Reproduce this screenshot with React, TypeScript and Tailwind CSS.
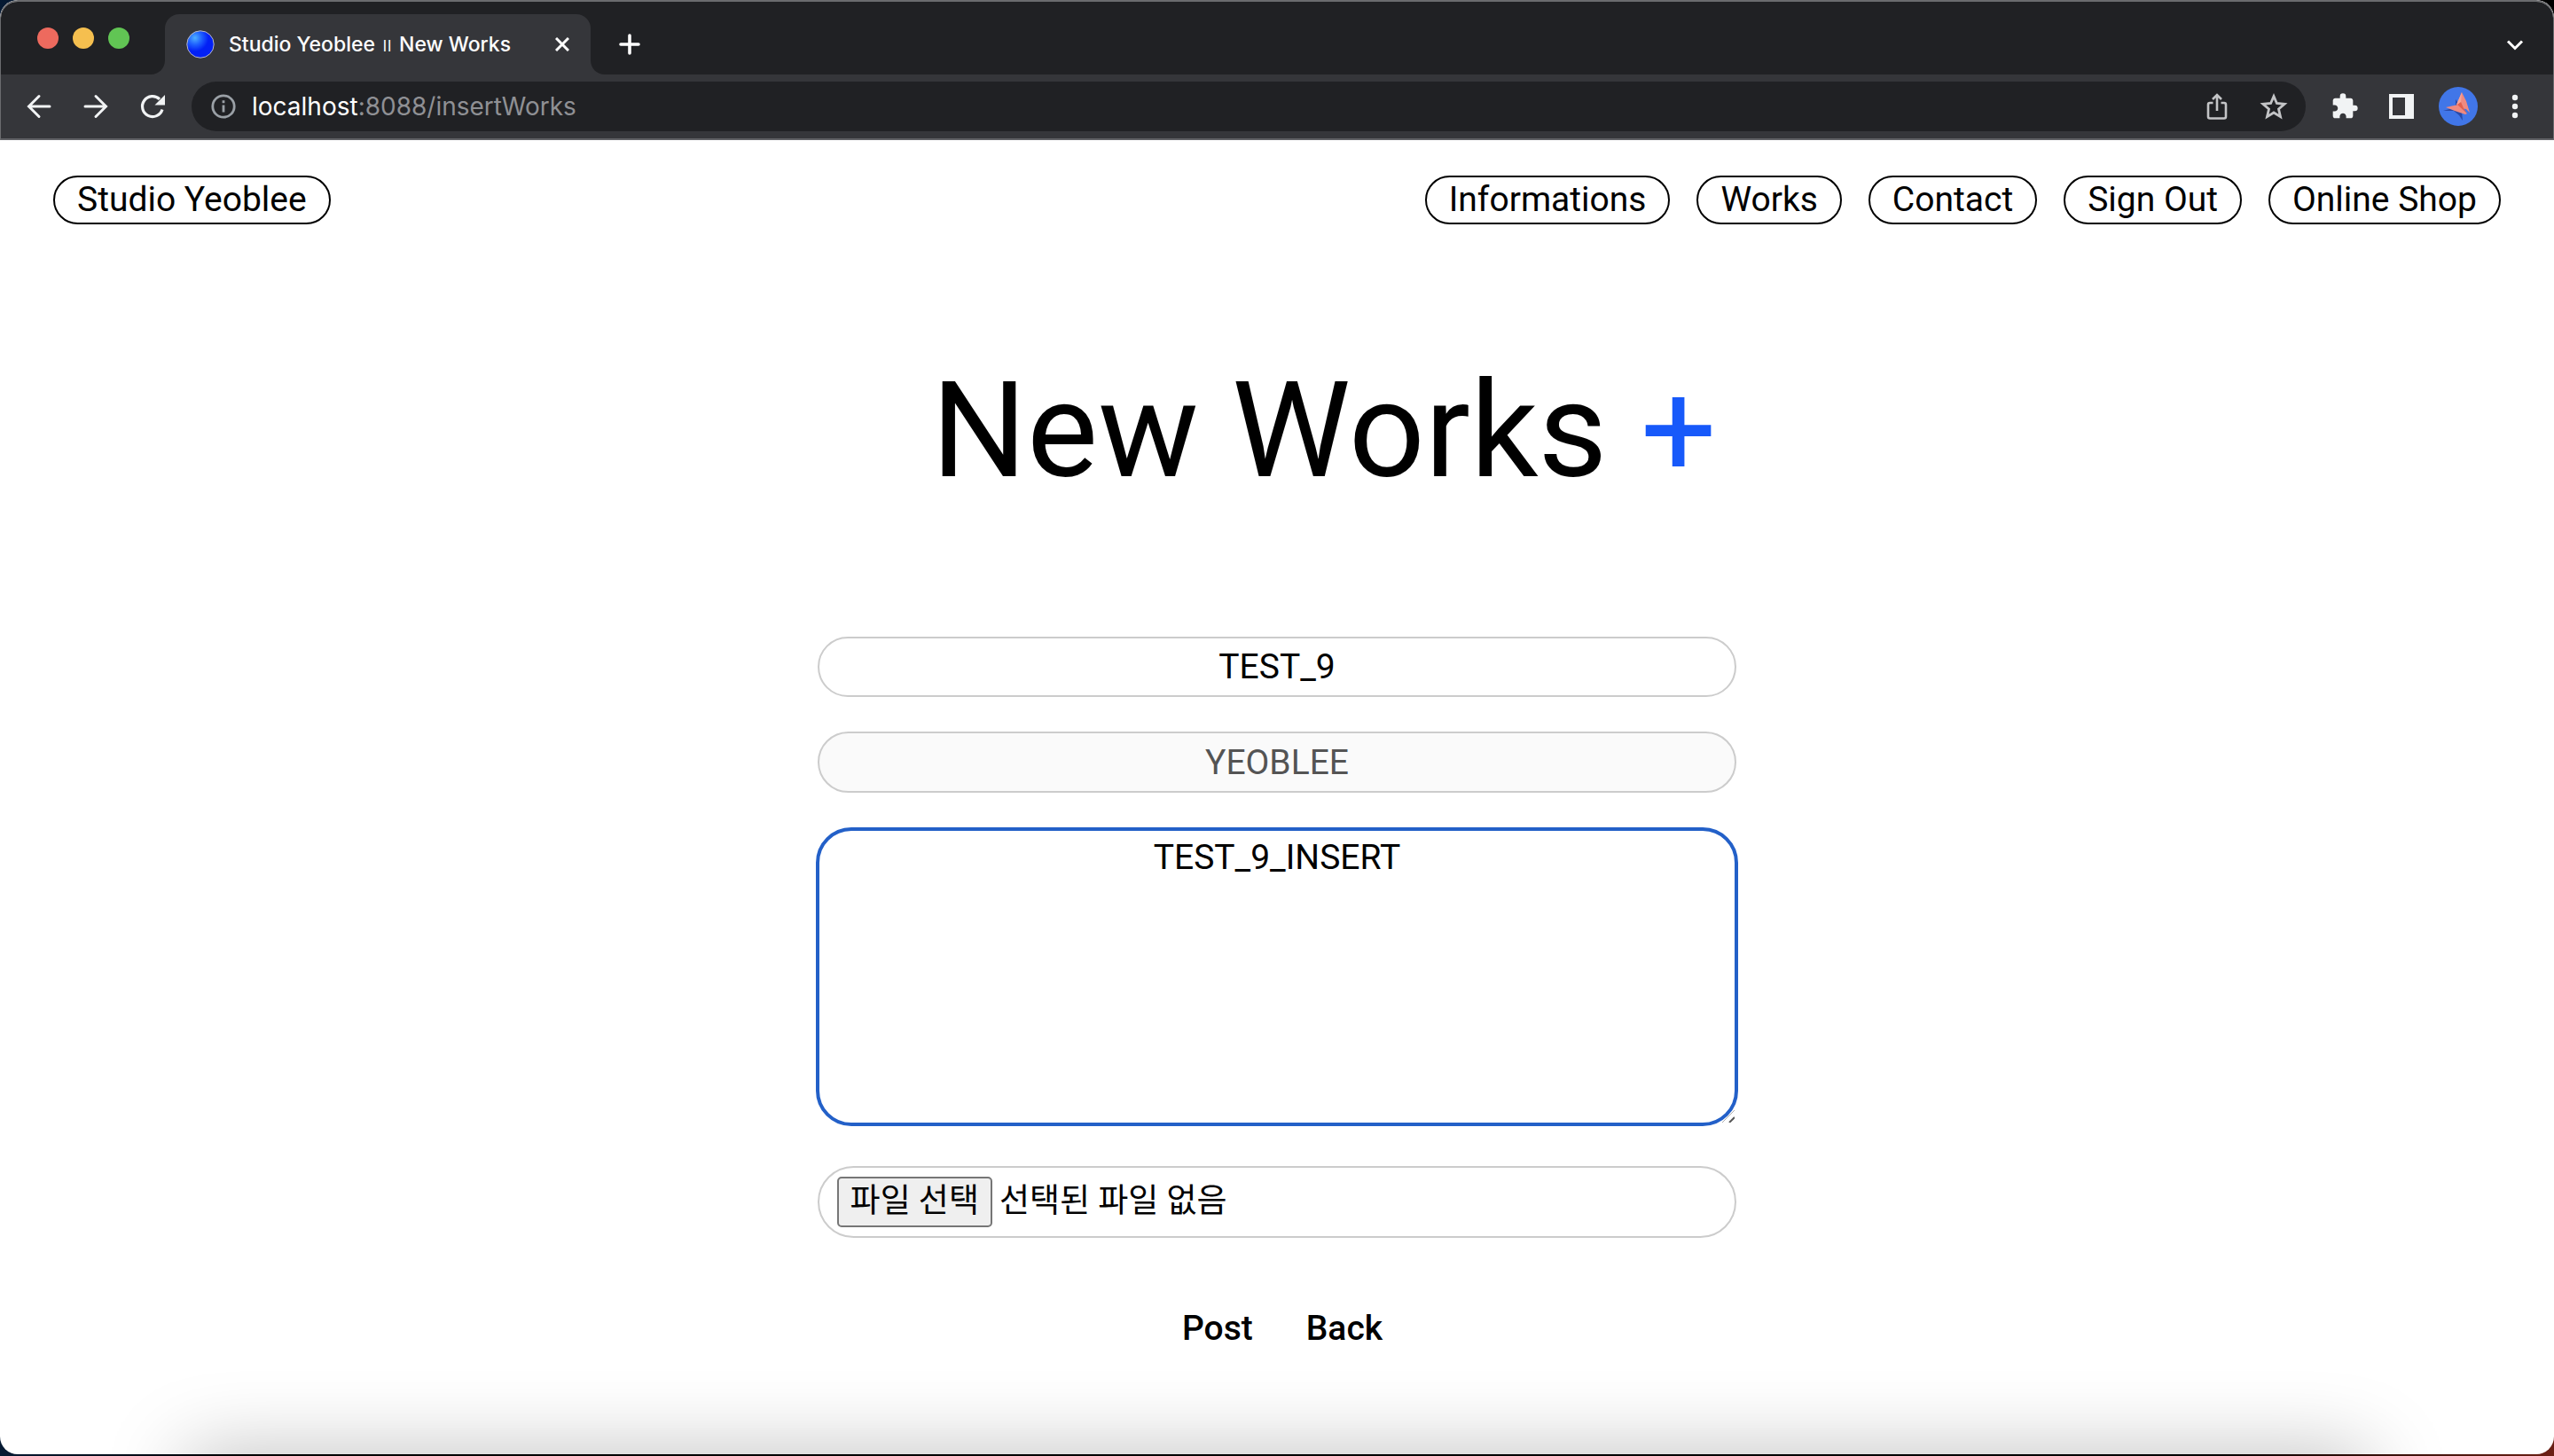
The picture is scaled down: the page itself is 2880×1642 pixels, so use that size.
import React, { useState } from "react";

const navItems = ["Informations", "Works", "Contact", "Sign Out", "Online Shop"];

const pill =
  "flex h-[55px] items-center rounded-full border-2 border-black px-[25px] pb-0.5 text-[39px] leading-[48px] whitespace-nowrap text-black";

const field =
  "w-full rounded-full border-2 border-[#cccccc] text-center text-[39px] leading-[48px]";

function TabStrip() {
  return (
    <div className="flex h-[82px] items-end bg-[#202124] pt-3.5 pr-[27px] pl-[41px] font-['Inter','Roboto',sans-serif]">
      <div className="flex gap-4 self-start pt-[15px]">
        <button aria-label="Close window" className="size-6 rounded-full bg-[#ed6a5e]" />
        <button aria-label="Minimize window" className="size-6 rounded-full bg-[#f5bf4f]" />
        <button aria-label="Zoom window" className="size-6 rounded-full bg-[#61c554]" />
      </div>
      <div className="flex h-full items-end pl-6">
        <svg className="size-4" viewBox="0 0 16 16" aria-hidden="true">
          <path d="M16 0v16H0C9 16 16 9 16 0z" fill="#35363a" />
        </svg>
        <div className="flex h-full w-[480px] items-center rounded-t-[16px] bg-[#35363a] px-6">
          <svg className="size-8" viewBox="0 0 32 32" aria-hidden="true">
            <defs>
              <radialGradient id="ball" cx="0.3" cy="0.26" r="0.5">
                <stop offset="0" stopColor="#4fb0ff" />
                <stop offset="0.5" stopColor="#1f62ff" />
                <stop offset="1" stopColor="#0220f5" />
              </radialGradient>
            </defs>
            <circle cx="16" cy="16" r="15.2" fill="url(#ball)" stroke="#b9b9c4" strokeWidth="1" />
          </svg>
          <span className="grow pl-4 text-[23px] leading-8 font-medium whitespace-nowrap text-white">
            Studio Yeoblee <span className="px-0.5 font-light">ıı</span> New Works
          </span>
          <button aria-label="Close tab">
            <svg className="size-4" viewBox="0 0 16 16" fill="none" stroke="#fff" strokeWidth="3">
              <path d="M1 1l14 14M15 1L1 15" />
            </svg>
          </button>
        </div>
        <svg className="size-4" viewBox="0 0 16 16" aria-hidden="true">
          <path d="M0 0v16h16C7 16 0 9 0 0z" fill="#35363a" />
        </svg>
      </div>
      <button aria-label="New tab" className="ml-4 flex h-full items-center">
        <svg className="size-6" viewBox="0 0 24 24" fill="none" stroke="#fff" strokeWidth="3.6" strokeLinecap="round">
          <path d="M12 2v20M2 12h20" />
        </svg>
      </button>
      <button aria-label="Search tabs" className="ml-auto flex h-full items-center">
        <svg className="size-8" viewBox="0 0 32 32" fill="none" stroke="#fff" strokeWidth="3">
          <path d="M8 12.500l8 8 8-8" />
        </svg>
      </button>
    </div>
  );
}

function Toolbar() {
  return (
    <div className="flex h-[74px] items-center border-b-2 border-[#606165] bg-[#35363a] px-[27px] font-['Inter','Roboto',sans-serif]">
      <div className="flex gap-8">
        <button aria-label="Back">
          <svg className="size-8" viewBox="0 0 32 32" fill="none" stroke="#f1f3f4" strokeWidth="3" strokeLinecap="round">
            <path d="M28 16H5M16 4.500L4.500 16L16 27.500" />
          </svg>
        </button>
        <button aria-label="Forward">
          <svg className="size-8" viewBox="0 0 32 32" fill="none" stroke="#f1f3f4" strokeWidth="3" strokeLinecap="round">
            <path d="M4 16h23M16 4.500L27.500 16L16 27.500" />
          </svg>
        </button>
        <button aria-label="Reload">
          <svg className="size-8" viewBox="0 0 32 32" fill="none">
            <path d="M27 19.500A11.500 11.500 0 1 1 24 7.800" stroke="#f1f3f4" strokeWidth="3.200" />
            <path d="M30 3v11.500H18.500z" fill="#f1f3f4" />
          </svg>
        </button>
      </div>
      <div className="ml-7 flex h-14 grow items-center rounded-full bg-[#202124] px-5">
        <svg className="size-8" viewBox="0 0 32 32" fill="none" stroke="#9aa0a6" strokeWidth="2.800" aria-hidden="true">
          <circle cx="16" cy="16" r="12.200" />
          <path d="M16 14.500v8M16 9.200v3" />
        </svg>
        <p className="grow pl-4 text-[28px] leading-9 text-[#8f9094]">
          <span className="text-white">localhost</span>:8088/insertWorks
        </p>
        <div className="flex gap-8">
          <button aria-label="Share">
            <svg className="size-8" viewBox="0 0 32 32" fill="none" stroke="#c3c4c6" strokeWidth="2.600">
              <path d="M11.500 12H8a2 2 0 0 0-2 2v13.500a2 2 0 0 0 2 2h16a2 2 0 0 0 2-2V14a2 2 0 0 0-2-2h-3.500" />
              <path d="M16 21V3.500M11 8l5-5 5 5" />
            </svg>
          </button>
          <button aria-label="Bookmark this page">
            <svg className="size-8" viewBox="0 0 32 32" fill="none" stroke="#c3c4c6" strokeWidth="2.800">
              <path d="M16 4.500l3.400 8 8.700.8-6.600 5.700 2 8.600L16 23l-7.500 4.600 2-8.600-6.600-5.700 8.700-.8z" />
            </svg>
          </button>
        </div>
      </div>
      <div className="flex items-center gap-8 pl-7">
        <button aria-label="Extensions">
          <svg className="size-8" viewBox="0 0 24 24" fill="#f1f3f4">
            <path d="M20.500 11H19V7c0-1.100-.9-2-2-2h-4V3.500a2.500 2.500 0 0 0-5 0V5H4c-1.100 0-1.990.9-1.990 2v3.800H3.500c1.490 0 2.700 1.210 2.700 2.700s-1.210 2.700-2.700 2.700H2V20c0 1.100.9 2 2 2h3.800v-1.500c0-1.490 1.210-2.700 2.700-2.700s2.700 1.210 2.700 2.700V22H17c1.100 0 2-.9 2-2v-4h1.500a2.500 2.500 0 0 0 0-5z" />
          </svg>
        </button>
        <button aria-label="Side panel">
          <svg className="size-8" viewBox="0 0 32 32" fill="#f1f3f4">
            <path fillRule="evenodd" d="M2 2h28v28H2zM6 6v20h14V6z" />
          </svg>
        </button>
        <button aria-label="Profile" className="-mx-1.5">
          <svg className="size-11" viewBox="0 0 44 44">
            <circle cx="22" cy="22" r="22" fill="#4176e8" />
            <path d="M5 27l14-4 0-9 3 4 4 10 1 10-4-6-6-5z" fill="#2a4aa8" />
            <path d="M26 6l-6 14 3 4 8 1 4 4-4-13z" fill="#f08a80" />
            <path d="M26 6l-6 14 5-2z" fill="#f5a49b" />
            <path d="M8 23l14-3 10 10-2 1-12-4z" fill="#f08a80" />
            <path d="M21 20l4-3 3 7 4 6z" fill="#e2604c" />
          </svg>
        </button>
        <button aria-label="Menu">
          <svg className="size-8" viewBox="0 0 32 32" fill="#f1f3f4">
            <circle cx="16" cy="6" r="3.200" />
            <circle cx="16" cy="16" r="3.200" />
            <circle cx="16" cy="26" r="3.200" />
          </svg>
        </button>
      </div>
    </div>
  );
}

export default function App() {
  const [title, setTitle] = useState("TEST_9");
  const [body, setBody] = useState("TEST_9_INSERT");

  return (
    <div className="min-h-screen bg-black bg-[radial-gradient(circle_at_bottom_right,#6b2015,transparent_400px),linear-gradient(90deg,#061a33,#000_10%)] pb-0.5 font-['Roboto','Noto_Sans_CJK_KR',sans-serif]">
      <div className="relative flex min-h-[calc(100vh-2px)] flex-col overflow-hidden rounded-[20px] bg-white">
        <header className="overflow-hidden rounded-t-[20px] border-x border-t-2 border-[#6a6b6e]">
          <TabStrip />
          <Toolbar />
        </header>

        <nav className="flex items-center justify-between px-15 pt-10">
          <a href="#home" className={pill}>Studio Yeoblee</a>
          <div className="flex gap-[30px]">
            {navItems.map((item) => (
              <a key={item} href="#nav" className={pill}>{item}</a>
            ))}
          </div>
        </nav>

        <main className="flex flex-col items-center text-black">
          <h1 className="mt-[143px] pl-[106px] text-[151px] leading-[180px]">
            New Works <span className="text-[#1759fa]">+</span>
          </h1>

          <form className="mt-[142px] flex w-9/25 flex-col" onSubmit={(e) => e.preventDefault()}>
            <input
              aria-label="Title"
              className={`${field} h-[68px] bg-white outline-none`}
              value={title}
              onChange={(e) => setTitle(e.target.value)}
            />
            <input
              aria-label="Writer"
              className={`${field} mt-[39px] h-[69px] bg-[#fafafa] text-[#545454]`}
              value="YEOBLEE"
              disabled
              readOnly
            />
            <div className="relative -mx-0.5 mt-[39px]">
              <textarea
                aria-label="Contents"
                className="block h-[337px] w-full resize-none rounded-[40px] border-4 border-[#2360c8] pt-1.5 text-center text-[39px] leading-[48px] outline-none"
                value={body}
                onChange={(e) => setBody(e.target.value)}
              />
              <svg className="absolute right-1 bottom-1 h-4 w-4" viewBox="0 0 16 16" stroke="#555" fill="none" aria-hidden="true">
                <path d="M2 16L16 2" strokeWidth="0.8" stroke="#999" />
                <path d="M10 16l6-6" strokeWidth="2" />
              </svg>
            </div>
            <div className="mt-[45px] flex h-[81px] items-center rounded-full border-2 border-[#cccccc] pl-5 text-[37px] leading-[52px]">
              <input id="file" type="file" className="sr-only" />
              <label
                htmlFor="file"
                className="flex h-[57px] items-center rounded-[5px] border-2 border-[#767676] bg-[#efefef] px-[13px] pb-0.5 whitespace-nowrap"
              >
                파일 선택
              </label>
              <span className="pb-0.5 pl-2 whitespace-nowrap">선택된 파일 없음</span>
            </div>
            <div className="mt-[78px] flex justify-center gap-15 pl-3 text-[39px] leading-[48px] font-medium">
              <button type="submit">Post</button>
              <button type="button">Back</button>
            </div>
          </form>
        </main>

        <div className="pointer-events-none absolute inset-x-[210px] -bottom-20 h-20 shadow-[0_0_90px_rgba(0,0,0,0.27)]" />
      </div>
    </div>
  );
}
